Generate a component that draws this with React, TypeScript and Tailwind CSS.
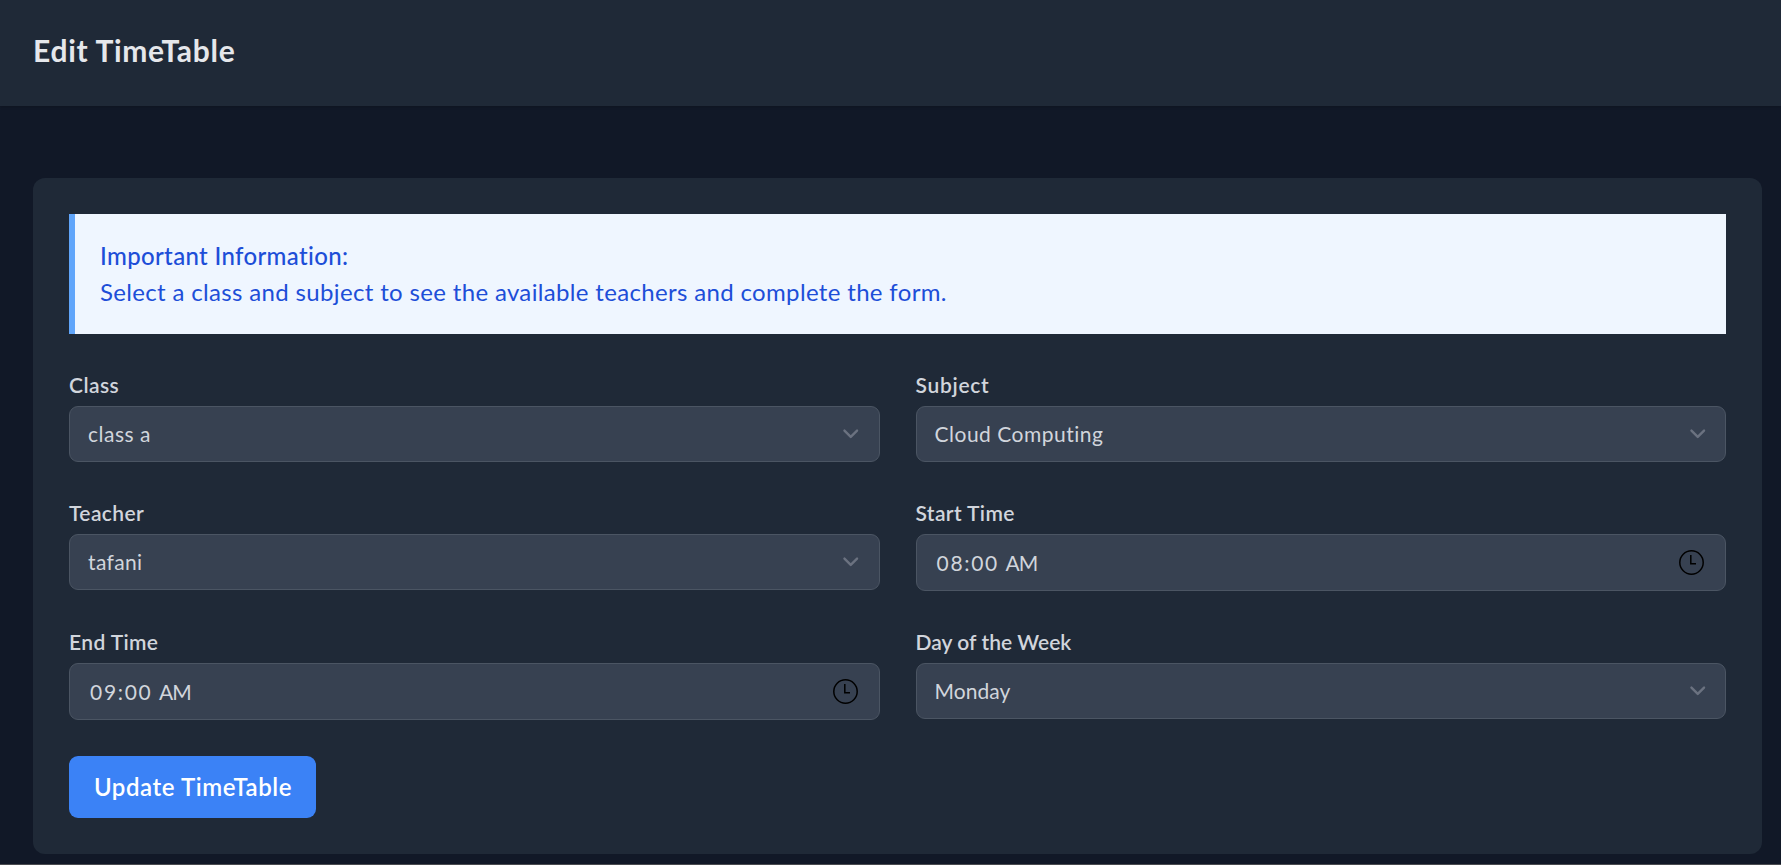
import React from "react";

type FieldProps = {
  label: string;
  labelClass: string;
  children: React.ReactNode;
};

function Field({ label, labelClass, children }: FieldProps) {
  return (
    <div>
      <label className={`block h-[30px] text-[21px] leading-[30px] font-semibold text-gray-300 ${labelClass}`}>
        {label}
      </label>
      {children}
    </div>
  );
}

function SelectBox({ value, valueClass }: { value: string; valueClass: string }) {
  return (
    <div className="mt-1.5 flex h-14 items-center justify-between rounded-[9px] border border-[#4b5563] bg-[#374151] pr-3 pl-[18px] text-[21px] leading-[30px] text-gray-300">
      <span className={valueClass}>{value}</span>
      <svg className="size-[31.5px]" viewBox="0 0 20 20" fill="none">
        <path
          d="M6 8l4 4 4-4"
          stroke="#6b7280"
          strokeWidth="1.5"
          strokeLinecap="round"
          strokeLinejoin="round"
        />
      </svg>
    </div>
  );
}

function TimeBox({ time, period }: { time: string; period: string }) {
  return (
    <div className="mt-1.5 flex h-[57px] items-center justify-between rounded-[9px] border border-[#4b5563] bg-[#374151] pr-[21px] pl-5 text-[21px] leading-[30px] text-gray-300">
      <span className="flex">
        <span className="w-[69px] tracking-[1.7px]">{time}</span>
        <span className="tracking-[-1px]">{period}</span>
      </span>
      <svg className="size-[25px]" viewBox="0 0 25 25" fill="none" stroke="#000000">
        <circle cx="12.5" cy="12.5" r="11.7" strokeWidth="1.5" />
        <path d="M11.8 5v8.7H17" strokeWidth="1.5" />
      </svg>
    </div>
  );
}

export default function App() {
  return (
    <div className="flex h-[865px] w-full flex-col overflow-hidden border-b border-[#4a4b50] bg-[#111827] font-['Lato',sans-serif]">
      <header className="h-[106px] shrink-0 bg-[#1f2937] pt-[31px] pl-[33px] shadow-sm">
        <h2 className="text-[30px] leading-[38px] font-bold tracking-[0.7px] text-gray-200">
          Edit TimeTable
        </h2>
      </header>

      <main className="mt-[72px] mr-[19px] ml-[33px] h-[676px] shrink-0 rounded-xl bg-[#1f2937] p-9">
        <div className="h-[120px] border-l-[6px] border-[#60a5fa] bg-[#eff6ff] px-[25px] pt-6 text-[24px] leading-9 text-[#1d4ed8]">
          <p className="font-medium tracking-[0.34px]">Important Information:</p>
          <p className="tracking-[0.34px]">
            Select a class and subject to see the available teachers and complete the form.
          </p>
        </div>

        <form className="mt-9">
          <div className="grid grid-cols-2 gap-9">
            <Field label="Class" labelClass="tracking-[0.43px]">
              <SelectBox value="class a" valueClass="tracking-[0.5px]" />
            </Field>
            <Field label="Subject" labelClass="tracking-[0.7px]">
              <SelectBox value="Cloud Computing" valueClass="tracking-[0.5px]" />
            </Field>
            <Field label="Teacher" labelClass="tracking-[0.39px]">
              <SelectBox value="tafani" valueClass="tracking-[0.35px]" />
            </Field>
            <Field label="Start Time" labelClass="tracking-[0.38px]">
              <TimeBox time="08:00" period="AM" />
            </Field>
            <Field label="End Time" labelClass="tracking-[0.39px]">
              <TimeBox time="09:00" period="AM" />
            </Field>
            <Field label="Day of the Week" labelClass="tracking-[0.04px]">
              <SelectBox value="Monday" valueClass="tracking-[0.05px]" />
            </Field>
          </div>
          <button
            type="button"
            className="mt-9 flex h-[62px] w-[247px] items-center justify-center rounded-[9px] bg-[#3b82f6] pl-px text-[24px] leading-9 font-semibold tracking-[0.58px] text-white"
          >
            Update TimeTable
          </button>
        </form>
      </main>
    </div>
  );
}
